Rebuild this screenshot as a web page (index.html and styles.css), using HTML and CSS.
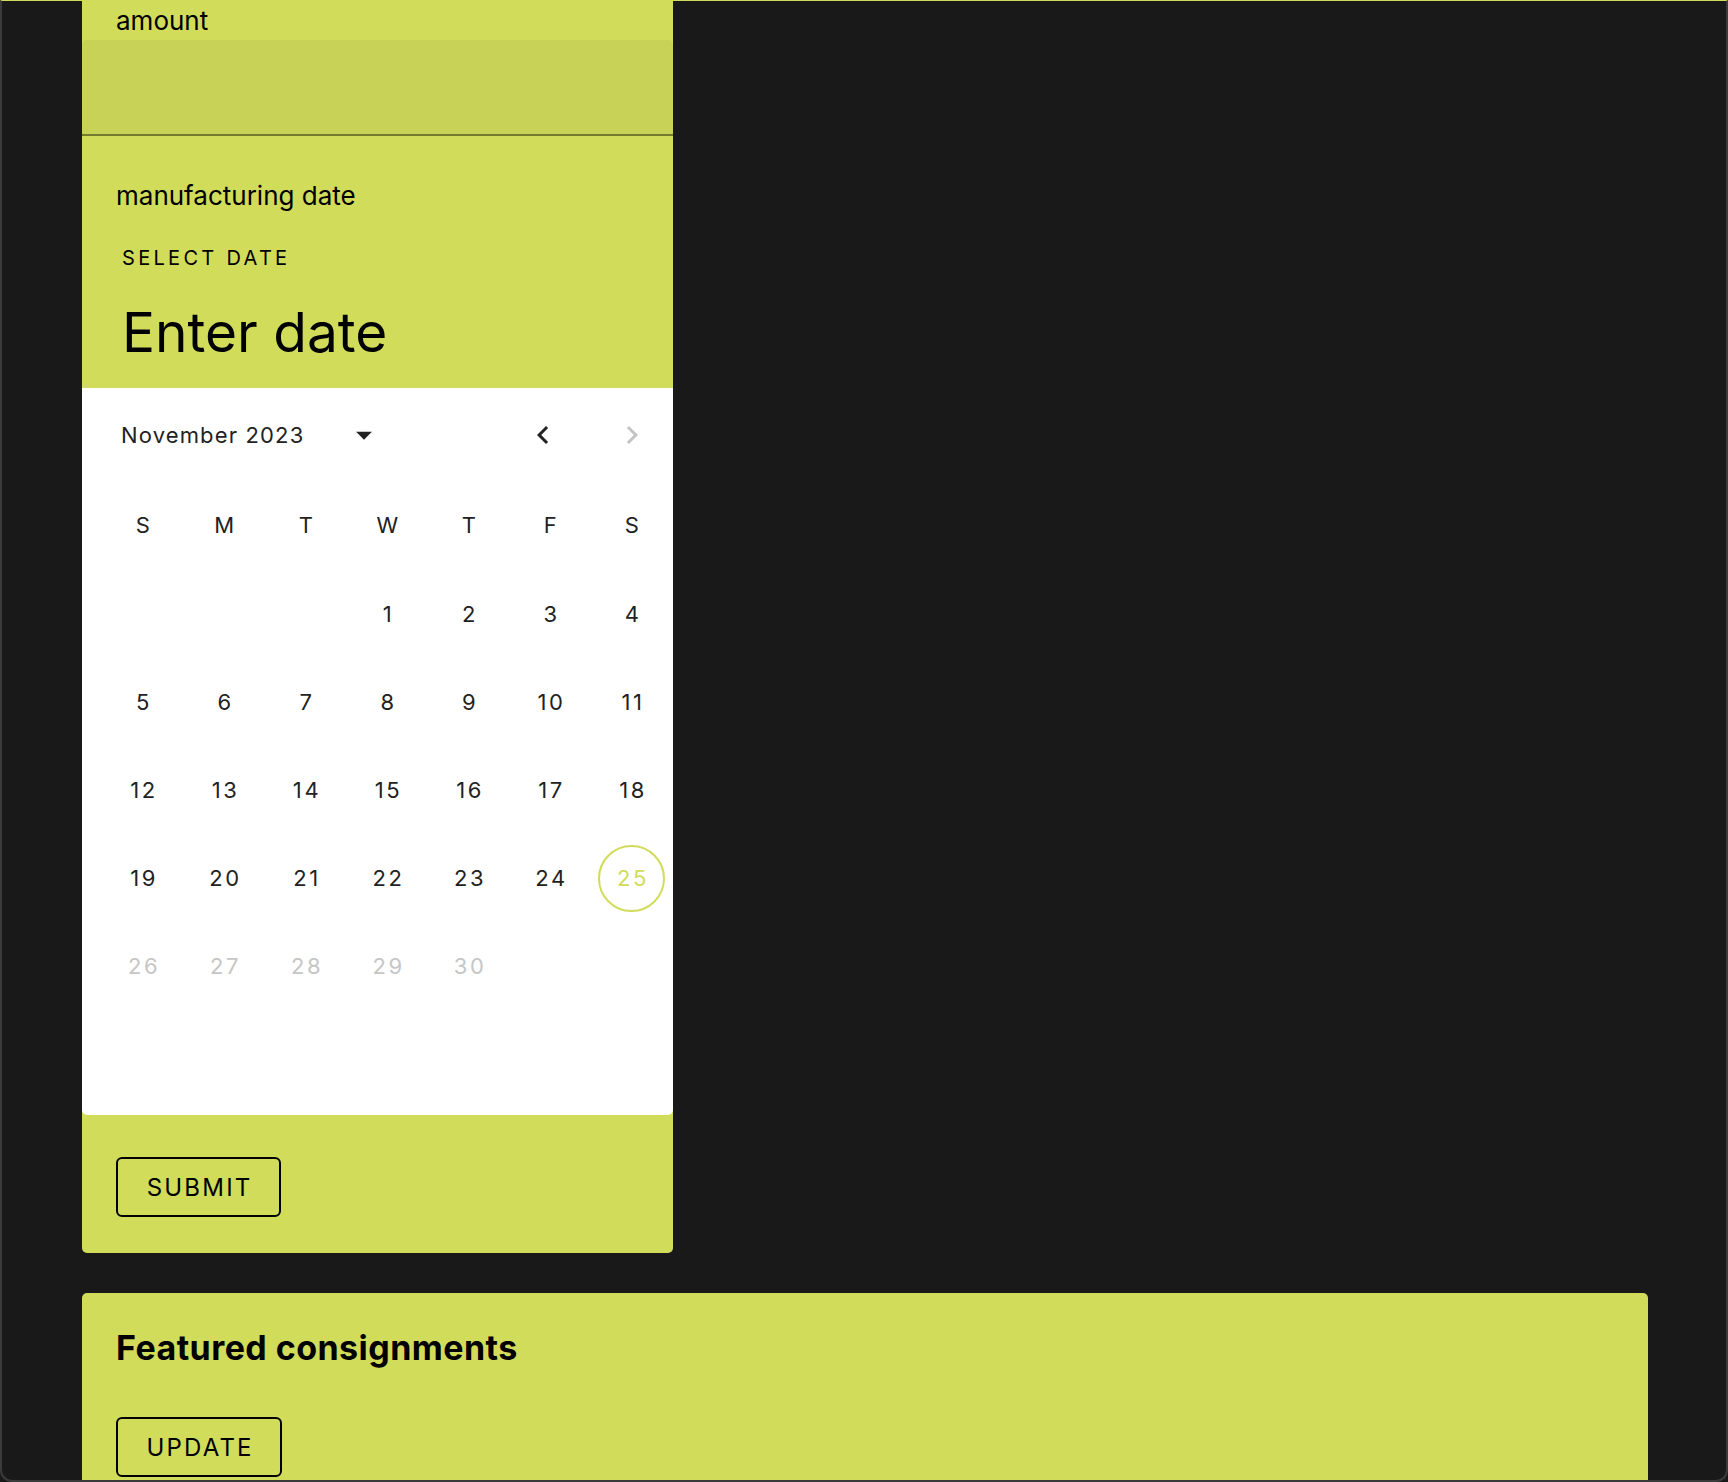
FILE: index.html
```html
<!DOCTYPE html>
<html lang="en">
<head>
<meta charset="utf-8">
<title>Consignment form</title>
<link rel="stylesheet" href="styles.css">
</head>
<body>
<div class="window">
  <main class="page">
    <section class="card form-card">
      <label class="field-label">amount</label>
      <div class="filled-input"></div>
      <label class="field-label date-label">manufacturing date</label>
      <div class="picker">
        <div class="picker-toolbar">
          <div class="overline">Select date</div>
          <div class="picker-title">Enter date</div>
        </div>
        <div class="calendar">
          <div class="cal-header">
            <div class="month-select">
              <span class="month-label">November 2023</span>
              <svg class="drop-icon" viewBox="0 0 24 24" width="38" height="38"><path d="M7 10l5 5 5-5z"/></svg>
            </div>
            <div class="nav">
              <svg class="nav-icon" viewBox="0 0 24 24" width="36" height="36"><path d="M15.41 16.59L10.83 12l4.58-4.59L14 6l-6 6 6 6 1.41-1.41z"/></svg>
              <svg class="nav-icon disabled" viewBox="0 0 24 24" width="36" height="36"><path d="M8.59 16.59L13.17 12 8.59 7.41 10 6l6 6-6 6-1.41-1.41z"/></svg>
            </div>
          </div>
          <div class="weekdays">
            <span>S</span><span>M</span><span>T</span><span>W</span><span>T</span><span>F</span><span>S</span>
          </div>
          <div class="days">
            <span class="cell"></span><span class="cell"></span><span class="cell"></span>
            <span class="cell"><span class="day">1</span></span>
            <span class="cell"><span class="day">2</span></span>
            <span class="cell"><span class="day">3</span></span>
            <span class="cell"><span class="day">4</span></span>
            <span class="cell"><span class="day">5</span></span>
            <span class="cell"><span class="day">6</span></span>
            <span class="cell"><span class="day">7</span></span>
            <span class="cell"><span class="day">8</span></span>
            <span class="cell"><span class="day">9</span></span>
            <span class="cell"><span class="day">10</span></span>
            <span class="cell"><span class="day">11</span></span>
            <span class="cell"><span class="day">12</span></span>
            <span class="cell"><span class="day">13</span></span>
            <span class="cell"><span class="day">14</span></span>
            <span class="cell"><span class="day">15</span></span>
            <span class="cell"><span class="day">16</span></span>
            <span class="cell"><span class="day">17</span></span>
            <span class="cell"><span class="day">18</span></span>
            <span class="cell"><span class="day">19</span></span>
            <span class="cell"><span class="day">20</span></span>
            <span class="cell"><span class="day">21</span></span>
            <span class="cell"><span class="day">22</span></span>
            <span class="cell"><span class="day">23</span></span>
            <span class="cell"><span class="day">24</span></span>
            <span class="cell"><span class="day today">25</span></span>
            <span class="cell"><span class="day muted">26</span></span>
            <span class="cell"><span class="day muted">27</span></span>
            <span class="cell"><span class="day muted">28</span></span>
            <span class="cell"><span class="day muted">29</span></span>
            <span class="cell"><span class="day muted">30</span></span>
          </div>
        </div>
      </div>
      <div class="actions">
        <button class="outline-btn">Submit</button>
      </div>
    </section>
    <section class="card featured">
      <h2 class="card-title">Featured consignments</h2>
      <button class="outline-btn update">Update</button>
    </section>
  </main>
</div>
</body>
</html>
```
FILE: styles.css
```css
html, body {
  margin: 0;
  padding: 0;
  background: #191919;
}

body {
  font-family: Inter, "Noto Sans", sans-serif;
  color: #000;
}

.window {
  height: 1482px;
  box-sizing: border-box;
  border: 2px solid #3b3b3b;
  border-top: 1px solid #d1dc5b;
  border-radius: 0 0 12px 12px;
  overflow: hidden;
  background: #191919;
}

.page {
  padding: 0 78px 0 80px;
  display: flex;
  flex-direction: column;
  align-items: flex-start;
  gap: 40px;
}

.card {
  background: #d1dc5b;
  border-radius: 0 0 5px 5px;
}

.form-card {
  width: 591px;
  display: flex;
  flex-direction: column;
}

.field-label {
  display: block;
  font-size: 26px;
  line-height: 39px;
  margin: 0 33px 0 34px;
}

.date-label {
  margin-top: 40px;
}

.filled-input {
  height: 94px;
  background: rgba(0, 0, 0, 0.045);
  border-radius: 5px 5px 0 0;
  border-bottom: 2px solid rgba(0, 0, 0, 0.42);
}

.picker {
  border-radius: 5px;
}

.picker-toolbar {
  padding: 27px 39px 23px 40px;
}

.overline {
  font-size: 20px;
  line-height: 32px;
  letter-spacing: 3.3px;
  text-transform: uppercase;
}

.picker-title {
  font-size: 55px;
  line-height: 66px;
  margin-top: 25px;
}

.calendar {
  background: #fff;
  border-radius: 0 0 5px 5px;
  padding-bottom: 105px;
  color: #222;
}

.cal-header {
  height: 94px;
  display: flex;
  align-items: center;
  padding: 0 23px 0 39px;
}

.month-select {
  display: flex;
  align-items: center;
}

.month-label {
  font-size: 22px;
  letter-spacing: 1.15px;
}

.drop-icon {
  margin-left: 41px;
  fill: #222;
}

.nav {
  margin-left: auto;
  display: flex;
  gap: 53px;
}

.nav-icon {
  fill: #222;
}

.nav-icon.disabled {
  fill: #c4c4c4;
}

.weekdays,
.days {
  display: grid;
  grid-template-columns: repeat(7, 81.5px);
  padding-left: 20px;
}

.weekdays {
  height: 86px;
  align-items: center;
  justify-items: center;
  font-size: 22px;
}

.days {
  margin-top: 2px;
  grid-auto-rows: 88px;
}

.cell {
  display: flex;
  align-items: center;
  justify-content: center;
}

.day {
  width: 67px;
  height: 67px;
  box-sizing: border-box;
  border-radius: 50%;
  display: flex;
  align-items: center;
  justify-content: center;
  font-size: 22px;
  letter-spacing: 2.6px;
  text-indent: 2.6px;
}

.day.today {
  border: 2px solid #d1dc5b;
  color: #d1dc5b;
}

.day.muted {
  color: #c6c6c6;
}

.actions {
  padding: 42px 0 36px 34px;
}

.outline-btn {
  width: 165px;
  height: 60px;
  box-sizing: border-box;
  border: 2px solid #000;
  border-radius: 6px;
  background: transparent;
  font-family: Inter, "Noto Sans", sans-serif;
  font-size: 24px;
  letter-spacing: 2.2px;
  text-indent: 2.2px;
  text-transform: uppercase;
  color: #000;
  padding: 0;
}

.featured {
  align-self: stretch;
  border-radius: 5px 5px 0 0;
  padding: 35px 34px 40px;
  height: 260px;
}

.card-title {
  margin: 0;
  font-size: 34px;
  line-height: 40px;
  font-weight: 700;
  letter-spacing: 0.45px;
}

.outline-btn.update {
  width: 166px;
  margin-top: 49px;
}
```
